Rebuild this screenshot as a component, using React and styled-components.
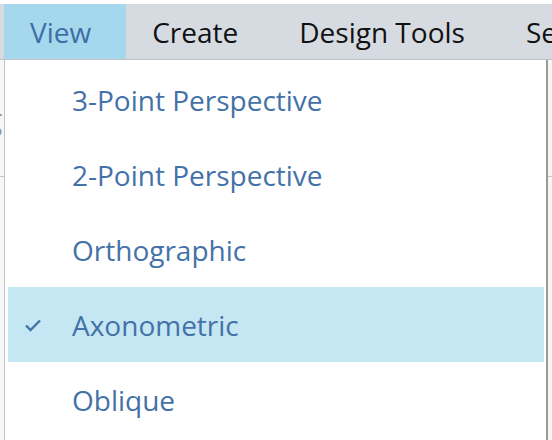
import React from "react";
import styled, { createGlobalStyle } from "styled-components";

const GlobalStyle = createGlobalStyle`
  body {
    margin: 0;
    background: #ffffff;
    font-family: "Open Sans", "Noto Sans", sans-serif;
  }
`;

const Page = styled.div`
  position: relative;
  width: 552px;
  height: 440px;
  overflow: hidden;
  padding-top: 4px;
  box-sizing: border-box;
`;

const MenuBar = styled.div`
  display: flex;
  height: 55px;
  padding-left: 4px;
  background: #d6dbe2;
  border-bottom: 1px solid #bfc3c8;
  white-space: nowrap;
`;

const MenuButton = styled.div`
  display: flex;
  align-items: center;
  padding: 0 35px 0 26px;
  font-size: 28px;
  color: ${(p) => (p.$active ? "#3f6ea6" : "#111111")};
  background: ${(p) => (p.$active ? "#a5d8ec" : "transparent")};
`;

const Workspace = styled.div`
  height: 380px;
  background: #f6f6f6;
`;

const ToolStrip = styled.div`
  display: flex;
  align-items: center;
  height: 116px;
  border-bottom: 1px solid #c8c8c8;
  font-size: 30px;
  color: #9a9a9a;
  padding-left: 0;
  text-indent: -14px;
  overflow: hidden;
`;

const Dropdown = styled.div`
  position: absolute;
  top: 60px;
  left: 4px;
  width: 544px;
  height: 390px;
  padding: 2px 2px 0 3px;
  box-sizing: border-box;
  background: #ffffff;
  border-left: 1px solid #c4c4c4;
  border-right: 2px solid #9a9a9a;
`;

const Item = styled.div`
  display: flex;
  align-items: center;
  height: 75px;
  padding-left: 16px;
  font-size: 28px;
  color: #4472a8;
  background: ${(p) => (p.$selected ? "#c4e7f3" : "transparent")};
`;

const CheckSlot = styled.span`
  display: flex;
  width: 48px;
  align-items: center;
`;

const Check = () => (
  <svg width="18" height="14" viewBox="0 0 18 14">
    <path d="M2 7.5 L6.5 12 L16 2.5" fill="none" stroke="#4472a8" strokeWidth="2.4" />
  </svg>
);

const views = [
  "3-Point Perspective",
  "2-Point Perspective",
  "Orthographic",
  "Axonometric",
  "Oblique",
];

export default function App() {
  return (
    <Page>
      <GlobalStyle />
      <MenuBar>
        <MenuButton $active>View</MenuButton>
        <MenuButton>Create</MenuButton>
        <MenuButton>Design Tools</MenuButton>
        <MenuButton>Settings</MenuButton>
      </MenuBar>
      <Workspace>
        <ToolStrip>g</ToolStrip>
      </Workspace>
      <Dropdown>
        {views.map((v) => (
          <Item key={v} $selected={v === "Axonometric"}>
            <CheckSlot>{v === "Axonometric" && <Check />}</CheckSlot>
            {v}
          </Item>
        ))}
      </Dropdown>
    </Page>
  );
}
